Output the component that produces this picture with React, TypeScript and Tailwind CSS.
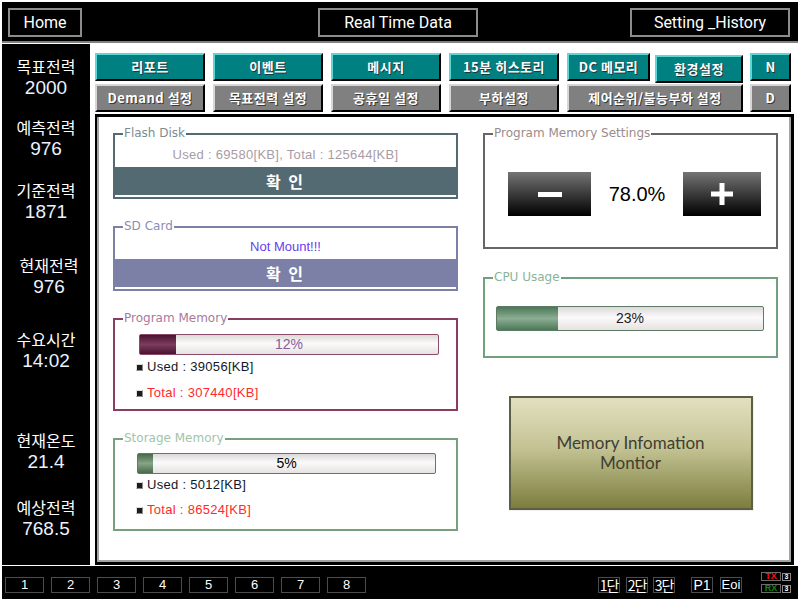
import React from 'react';

const sideItems = [
  { label: '목표전력', value: '2000', cls: 'mt-[11px]' },
  { label: '예측전력', value: '976', cls: 'mt-[17px]' },
  { label: '기준전력', value: '1871', cls: 'mt-[19px]' },
  { label: '현재전력', value: '976', cls: 'mt-[31px] pl-[6px]' },
  { label: '수요시간', value: '14:02', cls: 'mt-[30px]' },
  { label: '현재온도', value: '21.4', cls: 'mt-[57px]' },
  { label: '예상전력', value: '768.5', cls: 'mt-[23px]' },
];

const tealBtn =
  "h-[28px] shrink-0 bg-[#008080] border-2 border-t-[#5ed6d6] border-l-[#5ed6d6] border-b-black border-r-black flex items-center justify-center text-white font-bold text-[13px] tracking-[0.5px] [text-shadow:1px_1px_0_#1a3a3a] whitespace-nowrap";
const grayBtn =
  "h-[28px] shrink-0 bg-[#808080] border-2 border-t-[#d6d6d6] border-l-[#d6d6d6] border-b-black border-r-black flex items-center justify-center text-white font-bold text-[13px] tracking-[0.5px] [text-shadow:1px_1px_0_#3a3a3a] whitespace-nowrap";

function Group({
  title,
  border,
  legend,
  h,
  children,
}: {
  title: string;
  border: string;
  legend: string;
  h: string;
  children?: React.ReactNode;
}) {
  return (
    <div className={`relative border-2 ${border} ${h}`}>
      <span
        className={`absolute -top-[10px] left-[8px] bg-white px-[1px] text-[12px] leading-[16px] font-['DejaVu_Sans',sans-serif] ${legend}`}
      >
        {title}
      </span>
      {children}
    </div>
  );
}

function Bar({
  pct,
  w,
  h,
  border,
  fill,
  text,
  textColor,
  cls,
}: {
  pct: number;
  w: string;
  h: string;
  border: string;
  fill: string;
  text: string;
  textColor: string;
  cls: string;
}) {
  return (
    <div
      className={`relative ${w} ${h} ${cls} border ${border} rounded-[2px] bg-[linear-gradient(to_bottom,#dcd8d8,#fbfafa_45%,#e6e2e2)] flex items-center justify-center`}
    >
      <div className={`absolute left-0 top-0 bottom-0 ${fill}`} style={{ width: `${pct}%` }} />
      <span className={`relative text-[14px] ${textColor}`}>{text}</span>
    </div>
  );
}

function Bullet() {
  return <span className="inline-block w-[7px] h-[7px] bg-[#1c1c1c] border border-[#8a8a8a] border-t-[#e0e0e0] border-l-[#e0e0e0] mr-[4px]" />;
}

export default function App() {
  return (
    <div className="w-[801px] h-[602px] bg-white flex flex-col overflow-hidden font-['Liberation_Sans','Noto_Sans_CJK_KR',sans-serif]">
      {/* Top bar */}
      <div className="ml-[2px] mr-[3px] mt-[2px] h-[41px] bg-black border-b-2 border-[#808080] flex items-start pt-[6px] font-['Roboto',sans-serif] text-white text-[16px]">
        <div className="ml-[6px] w-[74px] h-[29px] border-2 border-[#8c8c8c] flex items-center justify-center">Home</div>
        <div className="ml-[236px] w-[160px] h-[29px] border-2 border-[#8c8c8c] flex items-center justify-center">Real Time Data</div>
        <div className="ml-[152px] w-[160px] h-[29px] border-2 border-[#8c8c8c] flex items-center justify-center">Setting _History</div>
      </div>

      {/* Middle */}
      <div className="mt-[1px] h-[521px] flex">
        {/* Sidebar */}
        <div className="ml-[2px] w-[88px] bg-black flex flex-col items-center">
          {sideItems.map((it) => (
            <div key={it.label} className={`${it.cls} flex flex-col items-center`}>
              <div className="text-white text-[16px] leading-[22px] font-['Noto_Sans_CJK_KR',sans-serif]">{it.label}</div>
              <div className="text-[#eaf2ff] text-[19px] leading-[22px]">{it.value}</div>
            </div>
          ))}
        </div>

        {/* Right column */}
        <div className="ml-[5px] w-[699px] flex flex-col">
          <div className="h-[70px] pt-[9px] flex flex-col gap-[3px] font-['Noto_Sans_CJK_KR',sans-serif]">
            <div className="flex items-start h-[28px]">
              <div className={`${tealBtn} w-[110px]`}>리포트</div>
              <div className={`${tealBtn} w-[110px] ml-[8px]`}>이벤트</div>
              <div className={`${tealBtn} w-[110px] ml-[8px]`}>메시지</div>
              <div className={`${tealBtn} w-[110px] ml-[8px]`}>15분 히스토리</div>
              <div className={`${tealBtn} w-[83px] ml-[8px]`}>DC 메모리</div>
              <div className={`${tealBtn} w-[88px] ml-[5px] mt-[2px]`}>환경설정</div>
              <div className={`${tealBtn} w-[41px] ml-[7px]`}>N</div>
            </div>
            <div className="flex h-[28px]">
              <div className={`${grayBtn} w-[110px]`}>Demand 설정</div>
              <div className={`${grayBtn} w-[110px] ml-[8px]`}>목표전력 설정</div>
              <div className={`${grayBtn} w-[110px] ml-[8px]`}>공휴일 설정</div>
              <div className={`${grayBtn} w-[110px] ml-[8px]`}>부하설정</div>
              <div className={`${grayBtn} w-[176px] ml-[8px]`}>제어순위/불능부하 설정</div>
              <div className={`${grayBtn} w-[41px] ml-[7px]`}>D</div>
            </div>
          </div>

          {/* Main panel */}
          <div className="flex-1 border-[3px] border-l-2 border-black flex">
            <div className="flex-1 bg-white border-l-2 border-r-2 border-b-2 border-[#a4a4a4] pl-[14px] pt-[16px] flex gap-[25px]">
              {/* Left column */}
              <div className="w-[345px] flex flex-col gap-[27px]">
                <Group title="Flash Disk" border="border-[#546a72]" legend="text-[#7c8c92]" h="h-[66px]">
                  <div className="h-[32px] pt-[12px] text-center text-[13px] leading-[16px] text-[#a89ca4] tracking-[0.3px]">
                    Used : 69580[KB], Total : 125644[KB]
                  </div>
                  <div className="h-[28px] bg-[#546a72] flex items-center justify-center text-white font-bold text-[16px] tracking-[2px] font-['Noto_Sans_CJK_KR',sans-serif]">
                    확 인
                  </div>
                </Group>
                <Group title="SD Card" border="border-[#7c80a6]" legend="text-[#8a8eb2]" h="h-[65px]">
                  <div className="h-[31px] pt-[11px] text-center text-[13px] leading-[16px] text-[#6a3cec]">Not Mount!!!</div>
                  <div className="h-[28px] bg-[#7c80a6] flex items-center justify-center text-white font-bold text-[16px] tracking-[2px] font-['Noto_Sans_CJK_KR',sans-serif]">
                    확 인
                  </div>
                </Group>
                <Group title="Program Memory" border="border-[#8a3c62]" legend="text-[#a87a9c]" h="h-[93px]">
                  <Bar
                    pct={12}
                    w="w-[300px]"
                    h="h-[21px]"
                    cls="mt-[14px] ml-[24px]"
                    border="border-[#8a4a6c]"
                    fill="bg-[linear-gradient(to_bottom,#4a1230,#7c3c5e_50%,#4a1230)]"
                    text="12%"
                    textColor="text-[#8a5a9c]"
                  />
                  <div className="mt-[4px] ml-[21px] flex items-center text-[13px] leading-[16px] text-[#101828] tracking-[0.3px]">
                    <Bullet />Used : 39056[KB]
                  </div>
                  <div className="mt-[10px] ml-[21px] flex items-center text-[13px] leading-[16px] text-[#ff2a2a] tracking-[0.3px]">
                    <Bullet />Total : 307440[KB]
                  </div>
                </Group>
                <Group title="Storage Memory" border="border-[#78a07c]" legend="text-[#a2c4aa]" h="h-[93px]">
                  <Bar
                    pct={5}
                    w="w-[299px]"
                    h="h-[21px]"
                    cls="mt-[13px] ml-[22px]"
                    border="border-[#5c7c5c]"
                    fill="bg-[linear-gradient(to_bottom,#4a6a4c,#86a488_50%,#4a6a4c)]"
                    text="5%"
                    textColor="text-black"
                  />
                  <div className="mt-[3px] ml-[21px] flex items-center text-[13px] leading-[16px] text-[#101828] tracking-[0.3px]">
                    <Bullet />Used : 5012[KB]
                  </div>
                  <div className="mt-[9px] ml-[21px] flex items-center text-[13px] leading-[16px] text-[#ff2a2a] tracking-[0.3px]">
                    <Bullet />Total : 86524[KB]
                  </div>
                </Group>
              </div>

              {/* Right column */}
              <div className="w-[295px] flex flex-col">
                <Group title="Program Memory Settings" border="border-[#666666]" legend="text-[#9a8c8c]" h="h-[116px]">
                  <div className="mt-[37px] ml-[23px] flex items-center">
                    <div className="w-[83px] h-[44px] bg-[linear-gradient(to_bottom,#747474,#000000)] flex items-center justify-center">
                      <svg width="24" height="5" viewBox="0 0 24 5">
                        <rect x="0" y="0" width="24" height="5" fill="#ffffff" />
                      </svg>
                    </div>
                    <div className="w-[92px] text-center text-[20px] text-black">78.0%</div>
                    <div className="w-[78px] h-[44px] bg-[linear-gradient(to_bottom,#747474,#000000)] flex items-center justify-center">
                      <svg width="22" height="22" viewBox="0 0 22 22">
                        <rect x="0" y="8.5" width="22" height="5" fill="#ffffff" />
                        <rect x="8.5" y="0" width="5" height="22" fill="#ffffff" />
                      </svg>
                    </div>
                  </div>
                </Group>
                <div className="mt-[28px]">
                  <Group title="CPU Usage" border="border-[#72a07e]" legend="text-[#8ab49a]" h="h-[81px]">
                    <Bar
                      pct={23}
                      w="w-[268px]"
                      h="h-[25px]"
                      cls="mt-[27px] ml-[11px]"
                      border="border-[#5c7a64]"
                      fill="bg-[linear-gradient(to_bottom,#4c7858,#8cae94_50%,#4c7858)]"
                      text="23%"
                      textColor="text-[#202020]"
                    />
                  </Group>
                </div>
                <div className="mt-[38px] mx-auto w-[244px] h-[114px] border-2 border-[#5e5e46] shadow-[1px_1px_0_#f0f0f0] bg-[linear-gradient(to_bottom,#e3e0c0,#c4c394_45%,#7c7e3e)] flex flex-col items-center justify-center font-['Lato',sans-serif] text-[17px] leading-[20px] text-[#3e3e32]">
                  <div>Memory Infomation</div>
                  <div>Montior</div>
                </div>
              </div>
            </div>
          </div>
        </div>
      </div>

      {/* Bottom bar */}
      <div className="mt-[1px] ml-[2px] mr-[3px] h-[33px] bg-black flex items-start pt-[11px] text-white">
        <div className="ml-[3px] flex gap-[7px]">
          {['1', '2', '3', '4', '5', '6', '7', '8'].map((n) => (
            <div key={n} className="w-[39px] h-[16px] border border-[#4c4c4c] flex items-center justify-center text-[13px] leading-[14px]">
              {n}
            </div>
          ))}
        </div>
        <div className="ml-[232px] flex items-start font-['Noto_Sans_CJK_KR','Liberation_Sans',sans-serif]">
          <div className="w-[22px] h-[16px] border border-[#4c4c4c] flex items-center justify-center text-[14px] leading-[14px] whitespace-nowrap tracking-[-1px]">1단</div>
          <div className="ml-[6px] w-[22px] h-[16px] border border-[#4c4c4c] flex items-center justify-center text-[14px] leading-[14px] whitespace-nowrap tracking-[-1px]">2단</div>
          <div className="ml-[5px] w-[22px] h-[16px] border border-[#4c4c4c] flex items-center justify-center text-[14px] leading-[14px] whitespace-nowrap tracking-[-1px]">3단</div>
          <div className="ml-[16px] w-[22px] h-[16px] border border-[#4c4c4c] flex items-center justify-center text-[14px] leading-[14px] font-['Liberation_Sans',sans-serif]">P1</div>
          <div className="ml-[7px] w-[22px] h-[16px] border border-[#4c4c4c] flex items-center justify-center text-[13px] leading-[14px] font-['Liberation_Sans',sans-serif]">Eoi</div>
        </div>
        <div className="ml-[19px] -mt-[5px] flex flex-col gap-[3px] font-['Liberation_Sans',sans-serif]">
          <div className="flex items-center">
            <div className="w-[20px] h-[9px] border border-[#6a6a6a] flex items-center justify-center text-[9px] leading-[9px] font-bold text-[#ff1010]">TX</div>
            <div className="ml-[1px] w-[9px] h-[8px] border border-[#8a8a8a] flex items-center justify-center text-[7px] leading-[7px] font-bold">3</div>
          </div>
          <div className="flex items-center">
            <div className="w-[20px] h-[9px] border border-[#6a6a6a] flex items-center justify-center text-[9px] leading-[9px] font-bold text-[#0a8a0a]">RX</div>
            <div className="ml-[1px] w-[9px] h-[8px] border border-[#8a8a8a] flex items-center justify-center text-[7px] leading-[7px] font-bold">3</div>
          </div>
        </div>
      </div>
    </div>
  );
}
